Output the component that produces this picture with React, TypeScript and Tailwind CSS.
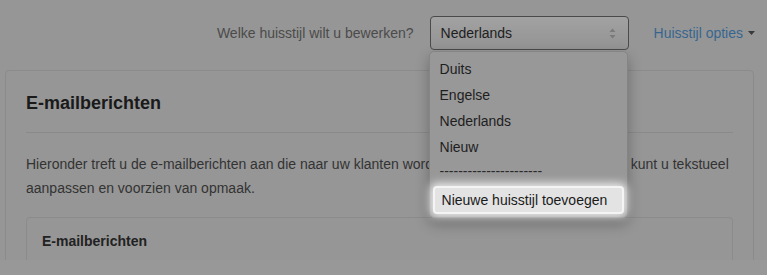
import React from 'react';

const talen = ['Duits', 'Engelse', 'Nederlands', 'Nieuw'];

function StijlKeuze() {
  return (
    <div className="relative">
      <div className="flex h-[34px] w-[199px] items-center justify-between rounded-[4px] border border-[#4a4a4a] bg-gradient-to-b from-[#a2a2a2] to-[#939393] pl-[10px] pr-[9px] text-[14px] text-[#1e1e1e]">
        <span>Nederlands</span>
        <svg width="7" height="11" viewBox="0 0 7 11" className="mr-[3px]">
          <path d="M3.5 0.5 L6.5 4 L0.5 4 Z" fill="#7a7a7a" />
          <path d="M0.5 7 L6.5 7 L3.5 10.5 Z" fill="#7a7a7a" />
        </svg>
      </div>

      {/* open menu */}
      <div className="absolute left-[-1px] top-[35px] w-[199px] rounded-[5px] border border-[#858585] bg-[#989898] pt-[4px] pb-[3px] shadow-[0_6px_14px_rgba(0,0,0,0.28)]">
        {talen.map((t) => (
          <div key={t} className="h-[26px] pl-[10px] leading-[26px] text-[14px] text-[#1e1e1e]">
            {t}
          </div>
        ))}
        <div className="h-[24px] pl-[10px] leading-[22px] text-[14px] text-[#2a2a2a]">----------------------</div>
        <div className="mx-[3px] mt-[2px] h-[28px] rounded-[4px] border-2 border-[#f4f4f4] bg-[#e3e3e3] pl-[7px] leading-[24px] text-[14px] text-[#1a1a1a] shadow-[0_0_8px_3px_rgba(255,255,255,0.8)]">
          Nieuwe huisstijl toevoegen
        </div>
      </div>
    </div>
  );
}

export default function App() {
  return (
    <div className="w-[767px] bg-[#989898] font-['Liberation_Sans',Arial,sans-serif]">
      <div className="h-[260px] overflow-hidden bg-[#969696]">
        <header className="flex items-center justify-end pt-[16px] pr-[12px]">
          <span className="mr-[16px] text-[14px] text-[#4b4b4b]">Welke huisstijl wilt u bewerken?</span>
          <StijlKeuze />
          <span className="ml-[25px] flex items-center gap-[5px] text-[14px] text-[#36668f]">
            Huisstijl opties
            <svg width="7" height="4" viewBox="0 0 7 4">
              <path d="M0 0 L7 0 L3.5 4 Z" fill="#3a3a3a" />
            </svg>
          </span>
        </header>

        <section className="mx-[5px] mt-[20px] w-[749px] rounded-[4px] border border-[#8b8b8b] px-[20px] pt-[20px]">
          <h1 className="pb-[17px] text-[18px] font-bold leading-[24px] text-[#1a1a1a]">E-mailberichten</h1>
          <hr className="border-t border-[#8a8a8a]" />
          <p className="mt-[19px] text-[14px] leading-[24px] text-[#333]">
            Hieronder treft u de e-mailberichten aan die naar uw klanten worden verzonden. Deze meldingen kunt u tekstueel aanpassen en voorzien van opmaak.
          </p>
          <div className="mt-[17px] rounded-[4px] border border-[#8b8b8b] px-[15px] pt-[14px] pb-[40px]">
            <h2 className="text-[14px] font-bold leading-[18px] text-[#222]">E-mailberichten</h2>
          </div>
        </section>
      </div>
      <div className="h-[15px]" />
    </div>
  );
}
